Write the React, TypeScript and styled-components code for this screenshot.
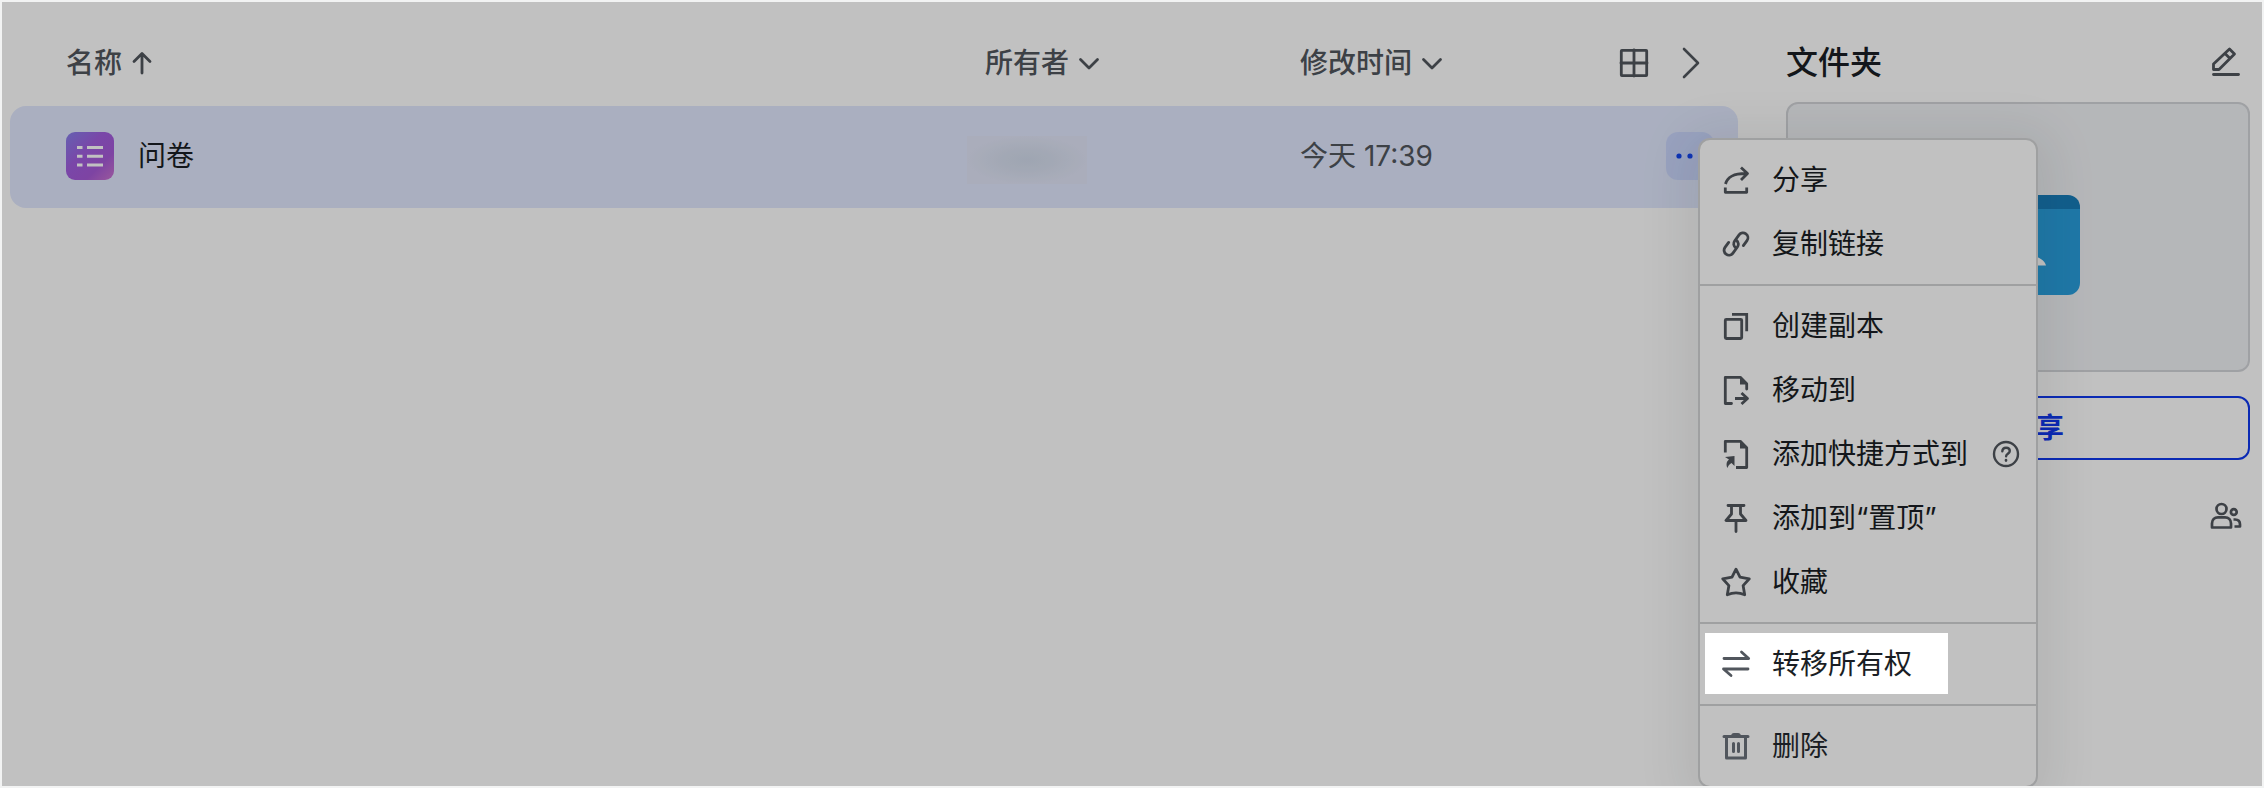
import React from "react";
import styled, { createGlobalStyle } from "styled-components";

const GlobalStyle = createGlobalStyle`
  * { box-sizing: border-box; }
  body {
    margin: 0;
    background: #ffffff;
    color: #1a1e24;
    font-family: Inter, "Noto Sans CJK SC", sans-serif;
    font-size: 28px;
    line-height: 40px;
  }
  button {
    font: inherit;
    color: inherit;
    background: none;
    border: 0;
    padding: 0;
    margin: 0;
    cursor: pointer;
  }
  svg { display: block; flex: none; }
`;

const Page = styled.div`
  display: flex;
  align-items: flex-start;
  gap: 48px;
  height: 100vh;
  padding: 0 12px 0 8px;
  border: 2px solid #f2f3f3;
  overflow: hidden;
`;

const FileList = styled.main`
  flex: 1;
  min-width: 0;
  padding-top: 18px;
`;

const Table = styled.table`
  width: 100%;
  table-layout: fixed;
  border-collapse: separate;
  border-spacing: 0;
`;

const Col = styled.col<{ $width?: number }>`
  width: ${(p) => (p.$width ? `${p.$width}px` : "auto")};
`;

const HeadCell = styled.th<{ $indent?: boolean }>`
  height: 86px;
  padding: 0 0 0 ${(p) => (p.$indent ? 56 : 0)}px;
  text-align: left;
  font-weight: 500;
  color: #51565d;
`;

const SortButton = styled.button`
  display: flex;
  align-items: center;
  gap: 8px;
`;

const ViewTools = styled.div`
  display: flex;
  align-items: center;
  justify-content: space-between;
  padding: 0 38px 0 18px;
`;

const IconButton = styled.button`
  display: block;
`;

const Cell = styled.td<{ $indent?: boolean; $muted?: boolean }>`
  height: 102px;
  padding: 0 0 2px ${(p) => (p.$indent ? 56 : 0)}px;
  background: #e1e8fe;
  color: ${(p) => (p.$muted ? "#51565d" : "#1a1e24")};
  &:first-child { border-radius: 16px 0 0 16px; }
  &:last-child { border-radius: 0 16px 16px 0; }
`;

const FileName = styled.div`
  display: flex;
  align-items: center;
  gap: 24px;
`;

const HiddenOwner = styled.div`
  width: 120px;
  height: 48px;
  margin: 8px 0 0 -18px;
  background: radial-gradient(closest-side, #d2dbec, #d6deee 35%, #e1e5f7 100%);
`;

const RowActions = styled.div`
  position: relative;
  display: flex;
  justify-content: flex-end;
  padding-right: 24px;
`;

const MoreButton = styled.button`
  display: flex;
  align-items: center;
  justify-content: center;
  width: 48px;
  height: 48px;
  border-radius: 12px;
  background: #cbd7fd;
`;

const Menu = styled.div`
  position: absolute;
  z-index: 2;
  top: 6px;
  left: 96px;
  width: 340px;
  border: 2px solid #d3d4d5;
  border-radius: 12px;
  background: #ffffff;
  box-shadow: 0 8px 48px 16px rgba(31, 35, 41, 0.08);
`;

const MenuGroup = styled.div`
  padding: 8px 0;
  & + & { border-top: 2px solid #d3d4d5; }
`;

const MenuItem = styled.button`
  position: relative;
  display: flex;
  align-items: center;
  gap: 22px;
  width: 100%;
  height: 64px;
  padding: 0 16px 0 22px;
  color: #1a1e24;
  font-weight: 400;
  white-space: nowrap;
  text-align: left;
  svg { color: #51565d; }
`;

const MenuLabel = styled.span`
  flex: 1;
`;

const Spotlight = styled.span`
  position: absolute;
  top: 1px;
  left: 5px;
  width: 243px;
  height: 61px;
  box-shadow: 0 0 0 4000px rgba(0, 0, 0, 0.243);
  pointer-events: none;
`;

const Panel = styled.aside`
  width: 464px;
  flex: none;
  padding-top: 22px;
`;

const PanelHead = styled.header<{ $end?: boolean }>`
  display: flex;
  align-items: center;
  justify-content: ${(p) => (p.$end ? "flex-end" : "space-between")};
  height: ${(p) => (p.$end ? 112 : 78)}px;
  padding-right: 8px;
  color: #51565d;
`;

const PanelTitle = styled.h2`
  margin: 0;
  font-size: 32px;
  font-weight: 500;
  color: #1a1e24;
`;

const Preview = styled.div`
  display: flex;
  align-items: center;
  justify-content: center;
  height: 270px;
  padding-top: 16px;
  border: 2px solid #d3d5d9;
  border-radius: 12px;
  background: #f0f2f5;
`;

const ShareButton = styled.button`
  display: flex;
  align-items: center;
  justify-content: center;
  gap: 8px;
  width: 100%;
  height: 64px;
  margin-top: 24px;
  border: 2px solid #0f38ee;
  border-radius: 12px;
  color: #0f38ee;
  font-weight: 700;
`;

type IconProps = { children: React.ReactNode; size?: number; width?: number };

const Icon = ({ children, size = 28, width = 2.8 }: IconProps) => (
  <svg
    width={size}
    height={size}
    viewBox={`0 0 ${size} ${size}`}
    fill="none"
    stroke="currentColor"
    strokeWidth={width}
    strokeLinecap="round"
    strokeLinejoin="round"
    overflow="visible"
    aria-hidden="true"
  >
    {children}
  </svg>
);

const ShareIcon = () => (
  <Icon>
    <path d="M3.500 18C5.500 11 11 7.200 25 7.500M19 1.500l6.500 6-6.500 6.500" strokeLinecap="butt" />
    <path d="M3.300 21.500v4.800h21.400v-4.800" strokeLinecap="butt" />
  </Icon>
);

const LinkIcon = () => (
  <Icon>
    <g transform="rotate(36 14 14)">
      <path d="M16 17.200a4.800 4.800 0 0 1-4.900-4.800V4.800a4.900 4.900 0 0 1 9.800 0v6.200" />
      <path d="M12 10.800a4.800 4.800 0 0 1 4.900 4.800V23.200a4.900 4.900 0 0 1-9.800 0v-6.200" />
    </g>
  </Icon>
);

const CopyIcon = () => (
  <Icon>
    <rect x="3.300" y="7.300" width="16.400" height="19.200" rx="1" />
    <path d="M10 2.300h14.700v17" strokeLinejoin="miter" strokeLinecap="butt" />
  </Icon>
);

const MoveIcon = () => (
  <Icon>
    <path d="M9.500 27.500H3.300V1.300h15l6.400 6.400V13" />
    <path d="M18 1v7.500h7.500z" fill="currentColor" stroke="none" />
    <path d="M13 22.500h12M19.500 17l6 5.500-6 5.500" strokeLinecap="butt" />
  </Icon>
);

const ShortcutIcon = () => (
  <Icon>
    <path d="M3.300 12.500V1.300h15l6.400 6.400v19.800H14" strokeLinecap="butt" />
    <path d="M18 1v7.500h7.500z" fill="currentColor" stroke="none" />
    <path d="M3 17l9.500-1v10l-3-3c-2 1-3.200 2.700-4.200 5-1.500-4-.5-7 1.700-8.500z" fill="currentColor" stroke="none" />
  </Icon>
);

const PinIcon = () => (
  <Icon>
    <path d="M6 1.500h16M9.500 1.500v8.500L4 16.500h20L18.500 10V1.500M14 16.500V27.500" />
  </Icon>
);

const StarIcon = () => (
  <Icon>
    <path d="M14 1.200l4 8 9.300 1.600-6.200 6.800 1.600 9.200c-5.800-2.600-11.600-2.600-17.400 0l1.600-9.200L.7 10.800 10 9.200z" />
  </Icon>
);

const SwapIcon = () => (
  <Icon>
    <path d="M2 8.500h24.700L19.500 2M26 19H1.500L9 25.500" />
  </Icon>
);

const TrashIcon = () => (
  <Icon width={3}>
    <path d="M2 4.500h24M4.500 5v21h19V5M11.500 11.500v8M16.500 11.500v8" />
    <path d="M9 4.500c0-2 1-3.500 3-3.500h4c2 0 3 1.500 3 3.500z" fill="currentColor" stroke="none" />
  </Icon>
);

const HelpIcon = () => (
  <Icon width={2.4}>
    <circle cx="14" cy="14" r="12" />
    <path d="M10.300 11.400c.1-2.300 1.600-3.700 3.800-3.700 2.200 0 3.700 1.300 3.700 3.300 0 2.600-3.700 2.900-3.700 5.200" />
    <path d="M14 20v.6" strokeWidth="2.600" />
  </Icon>
);

const GridIcon = () => (
  <Icon>
    <rect x="1.300" y="1.300" width="25.400" height="25.400" rx="0.600" />
    <path d="M14 1v26M1 14h26" />
  </Icon>
);

const ChevronRight = () => (
  <svg width="18" height="32" viewBox="0 0 18 32" fill="none" stroke="currentColor" strokeWidth="2.600" strokeLinejoin="round" strokeLinecap="round" aria-hidden="true">
    <path d="M2 2l14 14L2 30" />
  </svg>
);

const ChevronDown = () => (
  <svg width="24" height="24" viewBox="0 0 24 24" fill="none" stroke="currentColor" strokeWidth="2.800" strokeLinejoin="round" strokeLinecap="round" aria-hidden="true">
    <path d="M3.500 8.500l8.500 8.500 8.500-8.500" />
  </svg>
);

const ArrowUp = () => (
  <svg width="24" height="24" viewBox="0 0 24 24" fill="none" stroke="currentColor" strokeWidth="2.800" strokeLinejoin="round" strokeLinecap="round" aria-hidden="true">
    <path d="M12 22V3M4 10.500L12 2.500l8 8" />
  </svg>
);

const SurveyIcon = () => (
  <svg width="48" height="48" viewBox="0 0 48 48" aria-hidden="true">
    <defs>
      <linearGradient id="survey" x1="0" y1="0" x2="1" y2="1">
        <stop offset="0" stopColor="#8680ea" />
        <stop offset="0.400" stopColor="#a15edf" />
        <stop offset="0.700" stopColor="#a65ad8" />
        <stop offset="1" stopColor="#cc74cf" />
      </linearGradient>
    </defs>
    <rect width="48" height="48" rx="9" fill="url(#survey)" />
    <path d="M11 15.500h5.500M11 24.200h5.500M11 33h5.500M21 15.500h16M21 24.200h16M21 33h16" stroke="#fff" strokeWidth="3" />
  </svg>
);

const MoreIcon = () => (
  <svg width="32" height="8" viewBox="0 0 32 8" fill="#1244f0" aria-hidden="true">
    <circle cx="5" cy="4" r="2.600" />
    <circle cx="16" cy="4" r="2.600" />
    <circle cx="27" cy="4" r="2.600" />
  </svg>
);

const PencilIcon = () => (
  <svg width="32" height="32" viewBox="0 0 32 32" fill="none" stroke="currentColor" strokeWidth="2.800" strokeLinejoin="round" strokeLinecap="round" aria-hidden="true">
    <path d="M3.500 22.500v-5.500L19.500 2l5 5L9 22.500zM15 6.500l5 5" />
    <path d="M3.500 27.500h25" />
  </svg>
);

const PeopleIcon = () => (
  <svg width="32" height="28" viewBox="0 0 32 28" fill="none" stroke="currentColor" strokeWidth="2.700" strokeLinejoin="round" aria-hidden="true">
    <circle cx="11.500" cy="7" r="5" />
    <path d="M2 25.500v-4c0-4 2.500-6.200 6-6.200h7c3.500 0 6 2.200 6 6.200v4z" />
    <circle cx="23.800" cy="10" r="2.900" />
    <path d="M23.500 17.500h1.500c3.500 0 5 2 5 5v2h-5.500" />
  </svg>
);

const SharedFolderIcon = () => (
  <svg width="124" height="100" viewBox="0 0 124 100" aria-hidden="true">
    <path d="M0 12A12 12 0 0 1 12 0h100a12 12 0 0 1 12 12v30H0z" fill="#187dba" />
    <path d="M0 14h124v74a12 12 0 0 1-12 12H12A12 12 0 0 1 0 88z" fill="#299fde" />
    <circle cx="62" cy="46" r="12" fill="#fff" />
    <path d="M34 70.500c4-16 52-16 56 0z" fill="#fff" />
  </svg>
);

const groups: { icon: React.ReactNode; label: string; help?: boolean; active?: boolean }[][] = [
  [
    { icon: <ShareIcon />, label: "分享" },
    { icon: <LinkIcon />, label: "复制链接" },
  ],
  [
    { icon: <CopyIcon />, label: "创建副本" },
    { icon: <MoveIcon />, label: "移动到" },
    { icon: <ShortcutIcon />, label: "添加快捷方式到", help: true },
    { icon: <PinIcon />, label: "添加到“置顶”" },
    { icon: <StarIcon />, label: "收藏" },
  ],
  [{ icon: <SwapIcon />, label: "转移所有权", active: true }],
  [{ icon: <TrashIcon />, label: "删除" }],
];

const ContextMenu = () => (
  <Menu role="menu">
    {groups.map((items, i) => (
      <MenuGroup key={i} role="group">
        {items.map((item) => (
          <MenuItem key={item.label} role="menuitem">
            {item.icon}
            <MenuLabel>{item.label}</MenuLabel>
            {item.help && <HelpIcon />}
            {item.active && <Spotlight />}
          </MenuItem>
        ))}
      </MenuGroup>
    ))}
  </Menu>
);

export default function App() {
  return (
    <>
      <GlobalStyle />
      <Page>
        <FileList>
          <Table>
            <colgroup>
              <Col />
              <Col $width={315} />
              <Col $width={302} />
              <Col $width={136} />
            </colgroup>
            <thead>
              <tr>
                <HeadCell $indent scope="col">
                  <SortButton>名称<ArrowUp /></SortButton>
                </HeadCell>
                <HeadCell scope="col">
                  <SortButton>所有者<ChevronDown /></SortButton>
                </HeadCell>
                <HeadCell scope="col">
                  <SortButton>修改时间<ChevronDown /></SortButton>
                </HeadCell>
                <HeadCell as="td">
                  <ViewTools>
                    <IconButton aria-label="网格视图"><GridIcon /></IconButton>
                    <IconButton aria-label="收起侧栏"><ChevronRight /></IconButton>
                  </ViewTools>
                </HeadCell>
              </tr>
            </thead>
            <tbody>
              <tr>
                <Cell $indent>
                  <FileName><SurveyIcon />问卷</FileName>
                </Cell>
                <Cell><HiddenOwner /></Cell>
                <Cell $muted>今天 17:39</Cell>
                <Cell>
                  <RowActions>
                    <MoreButton aria-label="更多操作" aria-haspopup="menu"><MoreIcon /></MoreButton>
                    <ContextMenu />
                  </RowActions>
                </Cell>
              </tr>
            </tbody>
          </Table>
        </FileList>
        <Panel>
          <PanelHead>
            <PanelTitle>文件夹</PanelTitle>
            <IconButton aria-label="编辑"><PencilIcon /></IconButton>
          </PanelHead>
          <Preview><SharedFolderIcon /></Preview>
          <ShareButton><ShareIcon />分享</ShareButton>
          <PanelHead $end>
            <IconButton aria-label="协作者"><PeopleIcon /></IconButton>
          </PanelHead>
        </Panel>
      </Page>
    </>
  );
}
